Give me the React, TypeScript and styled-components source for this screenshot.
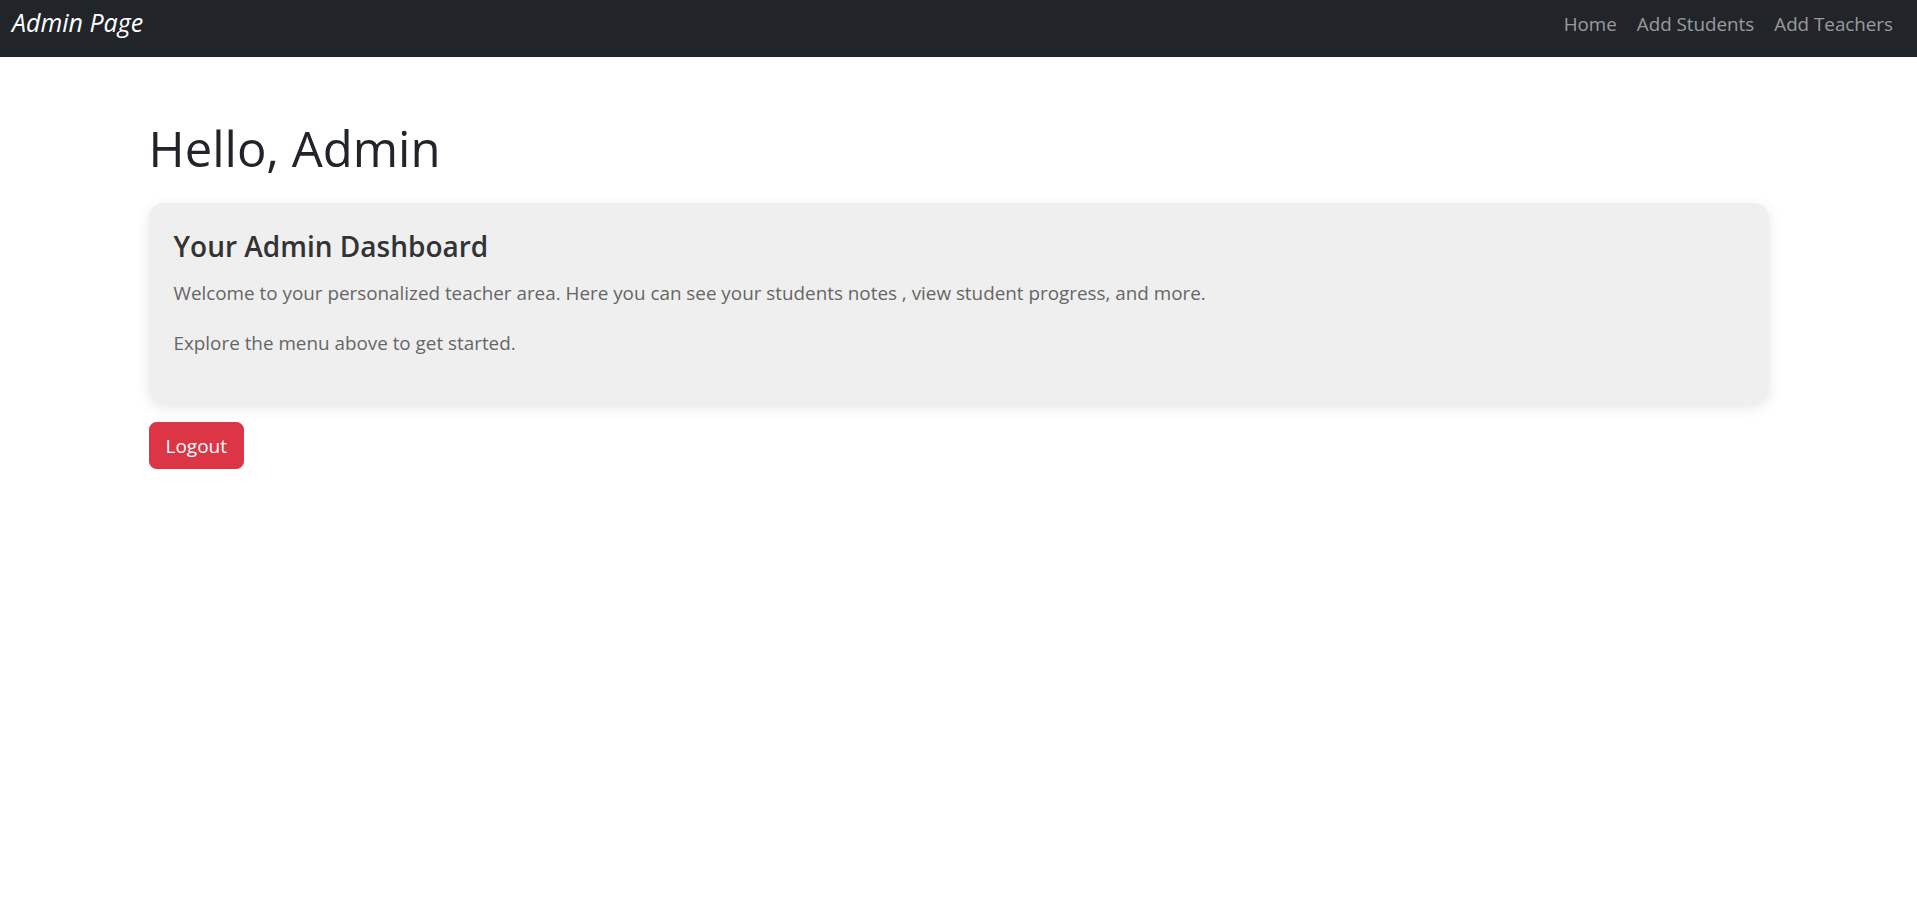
import React from "react";
import styled, { createGlobalStyle } from "styled-components";

const GlobalStyle = createGlobalStyle`
  html, body {
    margin: 0;
    padding: 0;
    background: #ffffff;
  }
  body {
    font-family: "Open Sans", "Noto Sans", "Liberation Sans", sans-serif;
    color: #212529;
  }
  * {
    box-sizing: border-box;
  }
`;

const Navbar = styled.nav`
  display: flex;
  align-items: flex-start;
  justify-content: space-between;
  height: 57px;
  padding: 0 14px 0 12px;
  background-color: #212529;
`;

const Brand = styled.a`
  margin-top: 6px;
  font-size: 25px;
  line-height: 32px;
  font-style: italic;
  color: #ffffff;
  text-decoration: none;
`;

const NavLinks = styled.ul`
  display: flex;
  margin: 10px 0 0;
  padding: 0;
  list-style: none;
`;

const NavLink = styled.a`
  display: block;
  padding: 0 10px;
  font-size: 18.8px;
  line-height: 28px;
  color: rgba(255, 255, 255, 0.55);
  text-decoration: none;
`;

const Container = styled.main`
  max-width: 1650px;
  margin: 0 auto;
  padding: 61px 15px 0;
`;

const Title = styled.h1`
  margin: 0 0 25px;
  font-size: 49px;
  font-weight: 500;
  line-height: 60px;
  color: #212529;
`;

const Card = styled.section`
  margin-bottom: 19px;
  padding: 25px;
  border-radius: 15px;
  background-color: #efefef;
  box-shadow: 0 4px 14px rgba(0, 0, 0, 0.1);
`;

const CardTitle = styled.h3`
  margin: 0 0 14px;
  font-size: 28px;
  font-weight: 600;
  line-height: 36px;
  color: #333333;
`;

const CardText = styled.p`
  margin: 0 0 20px;
  font-size: 18.85px;
  line-height: 30px;
  color: #666666;
`;

const LogoutButton = styled.button`
  height: 47px;
  padding: 0 16px;
  border: 1px solid #dc3545;
  border-radius: 7.5px;
  background-color: #dc3545;
  color: #ffffff;
  font-family: inherit;
  font-size: 19px;
  line-height: 30px;
  cursor: pointer;
`;

const links = ["Home", "Add Students", "Add Teachers"];

export default function App() {
  return (
    <>
      <GlobalStyle />
      <Navbar>
        <Brand href="#">Admin Page</Brand>
        <NavLinks>
          {links.map((label) => (
            <li key={label}>
              <NavLink href="#">{label}</NavLink>
            </li>
          ))}
        </NavLinks>
      </Navbar>
      <Container>
        <Title>Hello, Admin</Title>
        <Card>
          <CardTitle>Your Admin Dashboard</CardTitle>
          <CardText>
            Welcome to your personalized teacher area. Here you can see your
            students notes , view student progress, and more.
          </CardText>
          <CardText>Explore the menu above to get started.</CardText>
        </Card>
        <LogoutButton>Logout</LogoutButton>
      </Container>
    </>
  );
}
